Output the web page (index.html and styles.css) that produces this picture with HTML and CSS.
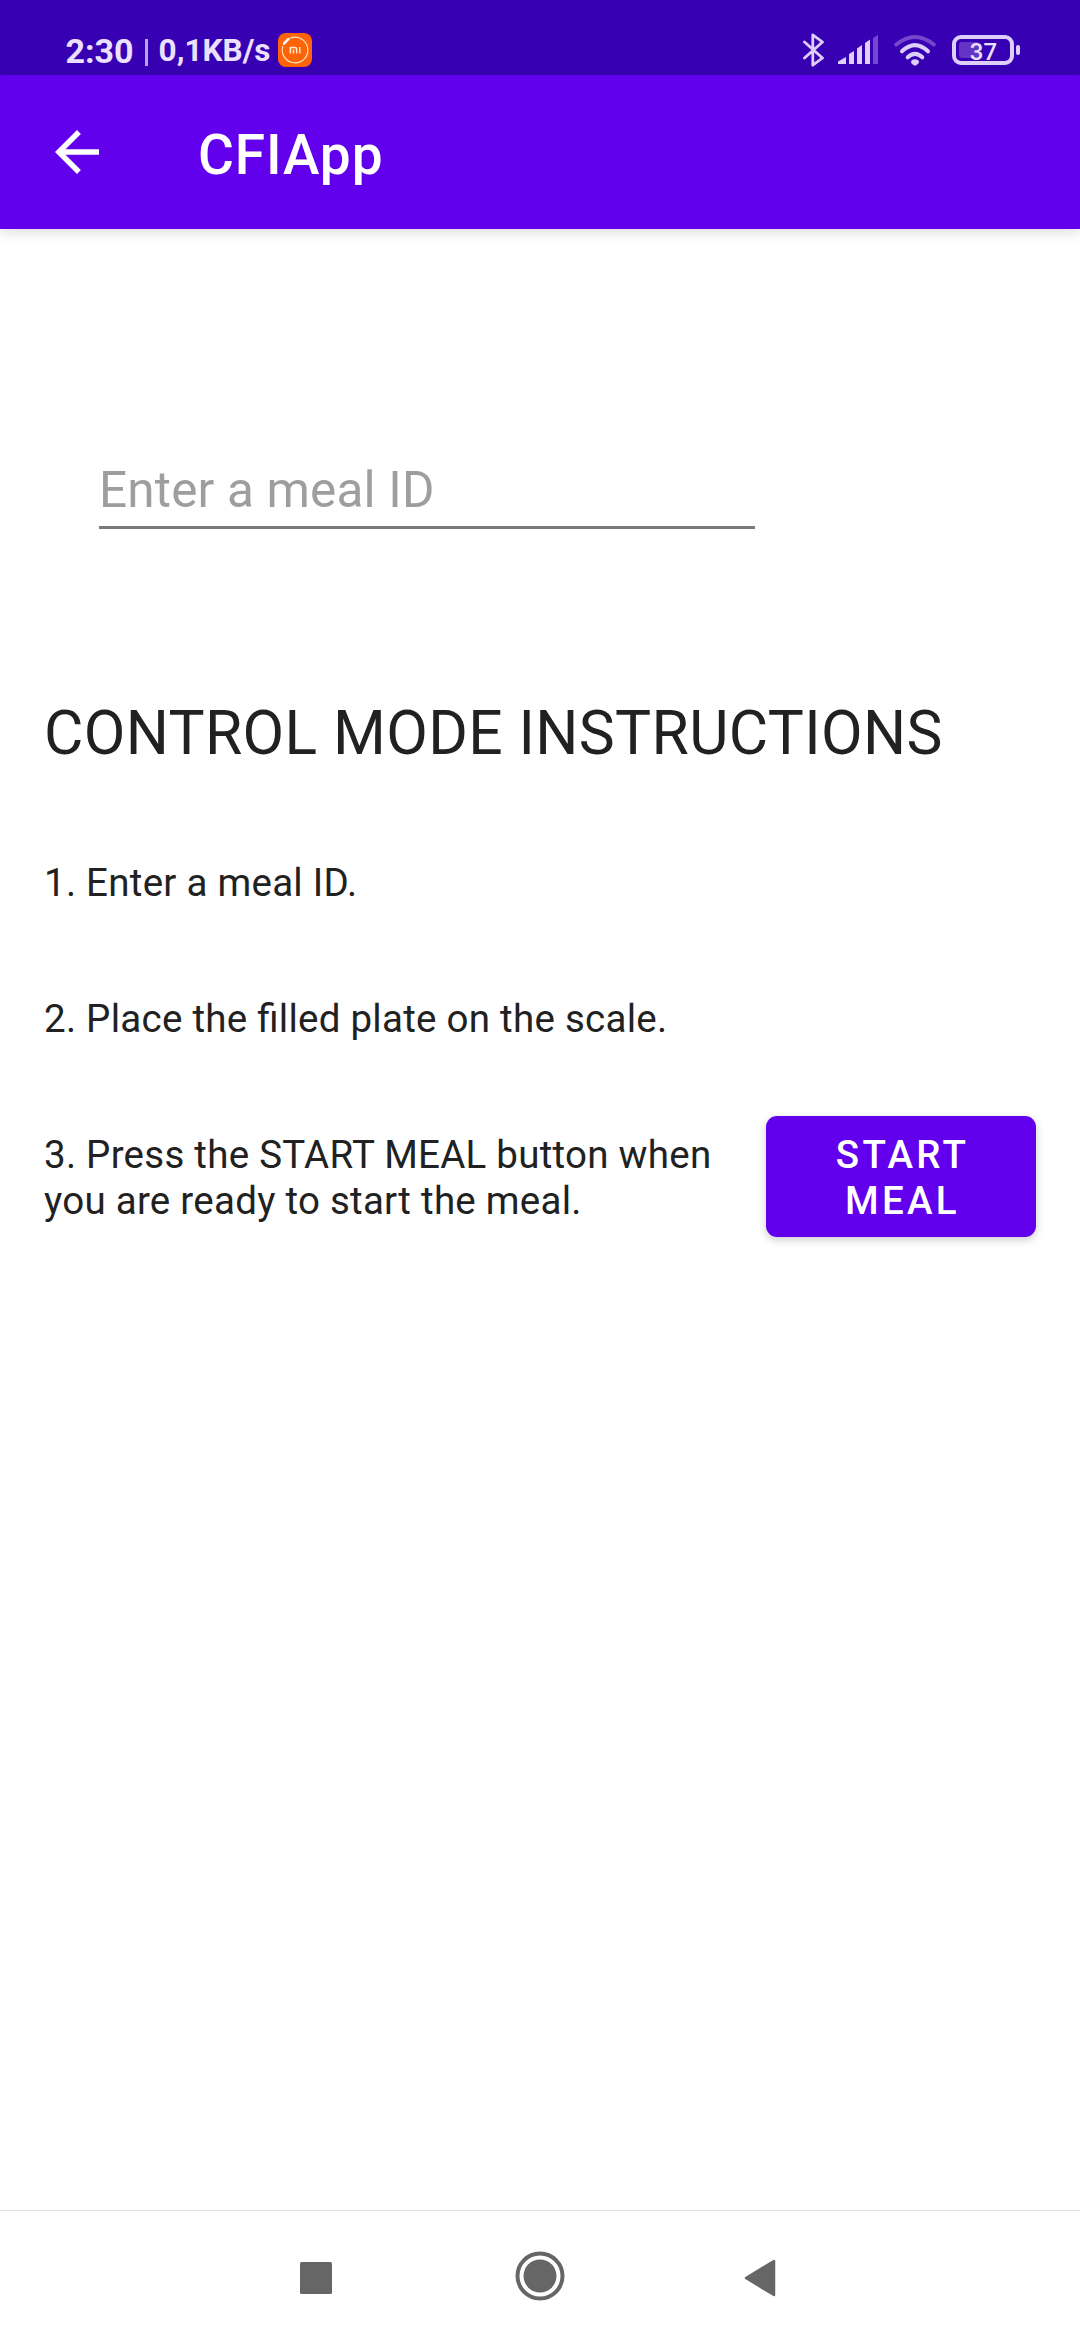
FILE: index.html
```html
<!DOCTYPE html>
<html lang="en">
<head>
<meta charset="utf-8">
<title>CFIApp</title>
<link rel="stylesheet" href="styles.css">
</head>
<body>
<div class="screen">
  <div class="status-bar">
    <div class="status-left">
      <span class="clock">2:30</span>
      <span class="separator"></span>
      <span class="net-speed">0,1KB/s</span>
      <svg class="mi-icon" width="34" height="34" viewBox="0 0 34 34">
        <rect width="34" height="34" rx="8" fill="#ff6309"/>
        <path d="M11.7 5.4a12.8 12.8 0 1 1-6.8 7.6" fill="none" stroke="#ffe9c9" stroke-width="1.1"/>
        <path d="M6 10.7L10.3 6.2" stroke="#fff" stroke-width="2.6" stroke-linecap="round"/>
        <path d="M12.4 20.5v-6h4.3q2 0 2 2v4M15.5 16.4v4.1M21.8 14v6.5" fill="none" stroke="#ffe9c9" stroke-width="1.5"/>
      </svg>
    </div>
    <div class="status-right">
      <svg class="bluetooth" width="22" height="36" viewBox="0 0 22 36">
        <path d="M1.500 10L19.500 26 9.800 33.200V2.800L19.500 10 1.500 26" fill="none" stroke="#decffa" stroke-width="2.800" stroke-linejoin="round" stroke-linecap="round"/>
      </svg>
      <svg class="signal" width="40" height="30" viewBox="0 0 40 30">
        <g fill="#decffa">
          <path d="M0 29v-2.500L8 22v7z"/>
          <path d="M11 29V19l5-3v13z"/>
          <path d="M19 29V13.500L24 10v19z"/>
          <path d="M27 29V8l5-3.500V29z"/>
        </g>
        <path d="M35 29V3l5-3v29z" fill="#7547cc"/>
      </svg>
      <svg class="wifi" width="42" height="32" viewBox="0 0 42 32">
        <g fill="none" stroke="#decffa" stroke-linecap="round">
          <path d="M2.300 10.500Q21-4.500 39.700 10.500" stroke="#7547cc" stroke-width="4"/>
          <path d="M8 17.300Q21 5 34 17.300" stroke-width="4"/>
          <path d="M13.700 23.300Q21 16.500 28.300 23.300" stroke-width="4"/>
        </g>
        <path d="M21 25.300c2.500 0 4 1.200 4 2.700s-2.500 3.500-4 3.500-4-2-4-3.500 1.500-2.700 4-2.700z" fill="#decffa"/>
      </svg>
      <div class="battery">
        <div class="battery-body"><span class="battery-fill"></span><span class="battery-level">37</span></div>
        <div class="battery-tip"></div>
      </div>
    </div>
  </div>

  <header class="app-bar">
    <svg class="back" width="66" height="66" viewBox="0 0 24 24">
      <path fill="#fff" d="M20 11H7.830l5.590-5.590L12 4l-8 8 8 8 1.410-1.410L7.830 13H20z"/>
    </svg>
    <h1 class="title">CFIApp</h1>
  </header>

  <main class="content">
    <div class="meal-field">Enter a meal ID</div>
    <h2 class="heading">CONTROL MODE INSTRUCTIONS</h2>
    <div class="steps">
      <p class="step">1. Enter a meal ID.</p>
      <p class="step">2. Place the filled plate on the scale.</p>
      <div class="start-row">
        <p class="step">3. Press the START MEAL button when<br>you are ready to start the meal.</p>
        <button class="start-button">START<br>MEAL</button>
      </div>
    </div>
  </main>

  <nav class="nav-bar">
    <svg width="32" height="32" viewBox="0 0 32 32"><rect width="32" height="32" rx="1.500" fill="#666"/></svg>
    <svg class="home" width="50" height="50" viewBox="0 0 50 50">
      <circle cx="25" cy="25" r="22.500" fill="none" stroke="#666" stroke-width="4"/>
      <circle cx="25" cy="25" r="16.500" fill="#666"/>
    </svg>
    <svg width="32" height="38" viewBox="0 0 32 38"><path d="M2 19L30 2v34z" fill="#666" stroke="#666" stroke-width="2.500" stroke-linejoin="round"/></svg>
  </nav>
</div>
</body>
</html>
```
FILE: styles.css
```css
* {
  box-sizing: border-box;
}

body,
h1,
h2,
p {
  margin: 0;
}

body {
  background: #fff;
  font-family: Roboto, sans-serif;
  color: #212121;
}

svg {
  display: block;
  flex: none;
}

.screen {
  width: 1080px;
  height: 2340px;
  display: flex;
  flex-direction: column;
  overflow: hidden;
}

/* Status bar */
.status-bar {
  height: 75px;
  padding: 0 60px 0 65.500px;
  background: #3700b3;
  display: flex;
  justify-content: space-between;
  align-items: flex-start;
  color: #ebe0fd;
}

.status-left {
  display: flex;
  align-items: flex-start;
}

.clock {
  font-size: 34px;
  font-weight: 700;
  line-height: 40px;
  padding-top: 31px;
}

.separator {
  width: 3px;
  height: 27px;
  margin: 39px 11px 0 11px;
  background: #b9a2e8;
}

.net-speed {
  font-size: 31.500px;
  font-weight: 700;
  line-height: 40px;
  padding-top: 31px;
}

.mi-icon {
  margin: 33px 0 0 7.500px;
}

.status-right {
  display: flex;
  align-items: flex-start;
}

.bluetooth {
  margin-top: 32px;
}

.signal {
  margin: 35px 0 0 13px;
}

.wifi {
  margin: 34px 0 0 16px;
}

.battery {
  display: flex;
  align-items: center;
  gap: 2px;
  margin: 35px 0 0 16px;
}

.battery-body {
  position: relative;
  width: 62px;
  height: 30px;
  border: 4px solid #decffa;
  border-radius: 9px;
  display: flex;
  justify-content: center;
  align-items: center;
}

.battery-fill {
  position: absolute;
  left: 3px;
  top: 3px;
  width: 20px;
  height: 16px;
  border-radius: 3px;
  background: #6434c4;
}

.battery-level {
  position: relative;
  padding: 3px 0 0 1px;
  font-size: 24px;
  font-weight: 500;
  line-height: 24px;
}

.battery-tip {
  width: 4px;
  height: 10px;
  border-radius: 2px;
  background: #decffa;
}

/* App bar */
.app-bar {
  height: 154px;
  padding-left: 44px;
  background: #6200ee;
  box-shadow: 0 3px 12px rgba(0, 0, 0, 0.14);
  display: flex;
  align-items: flex-start;
}

.back {
  margin-top: 44px;
}

.title {
  margin: 48px 0 0 88px;
  font-size: 55px;
  font-weight: 500;
  line-height: 64px;
  letter-spacing: 0.9px;
  color: #fff;
}

/* Content */
.content {
  flex: 1;
  padding: 232px 44px 0;
}

.meal-field {
  width: 656px;
  height: 68px;
  margin-left: 55px;
  border-bottom: 3px solid #7a7a7a;
  font-size: 49.500px;
  line-height: 58px;
  letter-spacing: 0.17px;
  color: #9e9e9e;
}

.heading {
  margin-top: 169px;
  font-size: 60.500px;
  font-weight: 400;
  line-height: 71px;
  letter-spacing: 0.38px;
  white-space: nowrap;
}

.steps {
  display: flex;
  flex-direction: column;
  gap: 90px;
  margin-top: 91px;
}

.step {
  font-size: 38.500px;
  line-height: 46px;
  letter-spacing: 0.26px;
  font-feature-settings: "liga" 1;
  white-space: nowrap;
}

.start-row {
  display: flex;
  justify-content: space-between;
  align-items: flex-start;
}

.start-button {
  width: 270px;
  height: 121px;
  margin-top: -16px;
  padding: 3px 0 0 3px;
  border: 0;
  border-radius: 11px;
  background: #6200ee;
  box-shadow: 0 3px 8px rgba(0, 0, 0, 0.2);
  font-family: inherit;
  font-size: 38.500px;
  font-weight: 500;
  line-height: 46px;
  letter-spacing: 0.085em;
  color: #fff;
}

/* System navigation */
.nav-bar {
  height: 130px;
  padding: 5px 304px 0 300px;
  border-top: 1px solid #e2e2e2;
  display: flex;
  justify-content: space-between;
  align-items: center;
}

.home {
  margin: 0 0 5px 3px;
}
```
